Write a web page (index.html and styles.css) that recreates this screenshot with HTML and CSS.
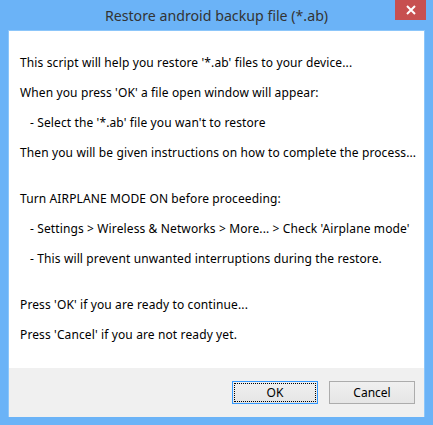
FILE: index.html
```html
<!DOCTYPE html>
<html>
<head>
<meta charset="utf-8">
<link rel="stylesheet" href="styles.css">
</head>
<body>
<div class="window">
  <div class="titlebar">
    <span class="title">Restore android backup file (*.ab)</span>
    <div class="close">
      <svg width="10" height="10" viewBox="0 0 10 10"><path d="M1 1 L9 9 M9 1 L1 9" stroke="#fff" stroke-width="2"/></svg>
    </div>
  </div>
  <div class="client">
    <div class="content">
      <div class="group">
        <div class="line">This script will help you restore '*.ab' files to your device...</div>
        <div class="line">When you press 'OK' a file open window will appear:</div>
        <div class="line indent">- Select the '*.ab' file you wan't to restore</div>
        <div class="line">Then you will be given instructions on how to complete the process...</div>
      </div>
      <div class="group">
        <div class="line">Turn AIRPLANE MODE ON before proceeding:</div>
        <div class="line indent">- Settings &gt; Wireless &amp; Networks &gt; More... &gt; Check 'Airplane mode'</div>
        <div class="line indent">- This will prevent unwanted interruptions during the restore.</div>
      </div>
      <div class="group">
        <div class="line">Press 'OK' if you are ready to continue...</div>
        <div class="line">Press 'Cancel' if you are not ready yet.</div>
      </div>
    </div>
    <div class="footer">
      <button class="btn default"><span class="focus">OK</span></button>
      <button class="btn">Cancel</button>
    </div>
  </div>
</div>
</body>
</html>
```

FILE: styles.css
```css
html, body {
  margin: 0;
  padding: 0;
  width: 433px;
  height: 425px;
  overflow: hidden;
}
.window {
  position: relative;
  width: 433px;
  height: 425px;
  box-sizing: border-box;
  background: #6bb3f7;
  padding: 0 8px 8px 8px;
  display: flex;
  flex-direction: column;
  font-family: "Noto Sans", sans-serif;
}
.titlebar {
  height: 30px;
  display: flex;
  justify-content: center;
  align-items: flex-start;
}
.title {
  font-size: 14.2px;
  color: #333;
  line-height: 20px;
  padding-top: 6px;
}
.close {
  position: absolute;
  top: 0;
  right: 7px;
  width: 31px;
  height: 20px;
  background: #c75050;
  display: flex;
  align-items: center;
  justify-content: center;
}
.close svg { display: block; }
.client {
  flex: 1;
  display: flex;
  flex-direction: column;
  background: #fff;
  border: 1px solid #8cc6fa;
  border-bottom: 0;
}
.content {
  flex: 1;
  padding: 17px 0 0 11px;
  font-size: 12px;
  letter-spacing: 0.12px;
  color: #000;
}
.group { margin-bottom: 16px; }
.line {
  height: 30px;
  line-height: 30px;
  white-space: nowrap;
}
.indent { padding-left: 10px; }
.footer {
  height: 49px;
  background: #f0f0f0;
  display: flex;
  justify-content: flex-end;
  align-items: flex-start;
  gap: 11px;
  padding: 13px 9px 0 0;
  box-sizing: border-box;
}
.btn {
  width: 86px;
  height: 23px;
  box-sizing: border-box;
  border: 1px solid #acacac;
  background: linear-gradient(#f0f0f0, #e5e5e5);
  font-family: "Noto Sans", sans-serif;
  font-size: 12px;
  color: #000;
  padding: 0;
  margin: 0;
  display: flex;
  align-items: center;
  justify-content: center;
}
.btn.default {
  border-color: #3399ff;
  padding: 1px;
}
.focus {
  flex: 1;
  align-self: stretch;
  display: flex;
  align-items: center;
  justify-content: center;
  border: 1px dotted #000;
}
```
